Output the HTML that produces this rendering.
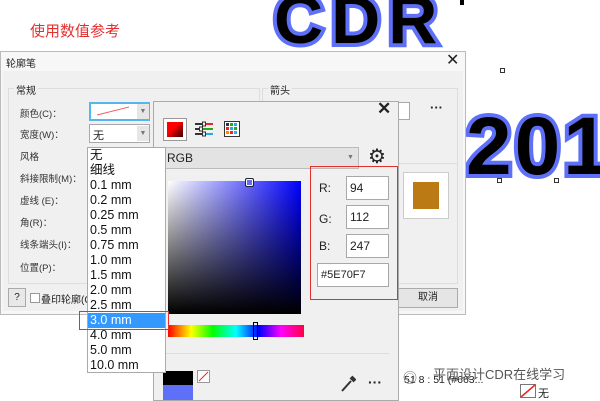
<!DOCTYPE html>
<html><head><meta charset="utf-8"><style>
*{margin:0;padding:0;box-sizing:border-box}
body{width:600px;height:400px;background:#fff;position:relative;overflow:hidden;font-family:"Liberation Sans","Noto Sans CJK SC",sans-serif;font-size:10px;color:#222}
.a{position:absolute}
.big{font-family:"Liberation Sans",sans-serif;font-weight:bold;color:#000;-webkit-text-stroke:8px #5e70f7;paint-order:stroke fill;line-height:1}
.lbl{position:absolute;font-size:9.5px;color:#333}
.inp{position:absolute;background:#fff;border:1px solid #a8a8a8}
.li{height:15px;line-height:15px;padding-left:2px;font-size:12.5px;color:#111}
</style></head><body>
<div class="a" style="left:30px;top:20px;color:#e53030;font-size:15px">使用数值参考</div>
<div class="a big" style="left:274px;top:-14px;font-size:68px;letter-spacing:8px">CDR</div>
<div class="a big" style="left:466px;top:106px;font-size:82px;letter-spacing:3px">201</div>
<div class="a" style="left:460px;top:0;width:4px;height:5px;background:#000"></div>
<div class="a" style="left:500px;top:68px;width:5px;height:5px;border:1px solid #333"></div>
<div class="a" style="left:497px;top:178px;width:5px;height:5px;border:1px solid #333"></div>
<div class="a" style="left:554px;top:178px;width:5px;height:5px;border:1px solid #333"></div>

<!-- dialog -->
<div class="a" style="left:0;top:51px;width:466px;height:264px;background:#f7f7f7;border:1px solid #bbb"></div>
<div class="a" style="left:6px;top:55px;font-size:10px">轮廓笔</div>
<div class="a" style="left:446px;top:50px;font-size:16px">✕</div>
<div class="a" style="left:3px;top:71px;width:460px;height:240px;background:#f0f0f0"></div>
<div class="a" style="left:8px;top:88px;width:252px;height:196px;border:1px solid #ddd"></div>
<div class="a" style="left:14px;top:82px;background:#f0f0f0;padding:0 2px">常规</div>
<div class="a" style="left:262px;top:88px;width:196px;height:196px;border:1px solid #ddd"></div>
<div class="a" style="left:268px;top:82px;background:#f0f0f0;padding:0 2px">箭头</div>
<div class="lbl" style="left:20px;top:106px">颜色(C)：</div>
<div class="lbl" style="left:20px;top:127px">宽度(W)：</div>
<div class="lbl" style="left:20px;top:149px">风格</div>
<div class="lbl" style="left:20px;top:171px">斜接限制(M)：</div>
<div class="lbl" style="left:20px;top:193px">虚线 (E)：</div>
<div class="lbl" style="left:20px;top:215px">角(R)：</div>
<div class="lbl" style="left:20px;top:237px">线条端头(I)：</div>
<div class="lbl" style="left:20px;top:260px">位置(P)：</div>
<div class="inp" style="left:89px;top:102px;width:61px;height:19px;border:2px solid #57b5ee"></div>
<svg class="a" style="left:96px;top:106px" width="34" height="10"><line x1="1" y1="9" x2="33" y2="1" stroke="#f06060" stroke-width="1"/></svg>
<div class="a" style="left:137px;top:104px;width:12px;height:15px;background:#e6e6e6;font-size:7px;text-align:center;line-height:15px;color:#777">▼</div>
<div class="inp" style="left:89px;top:124px;width:61px;height:19px"></div>
<div class="a" style="left:93px;top:127px;font-size:11px">无</div>
<div class="a" style="left:137px;top:126px;width:12px;height:15px;background:#e6e6e6;font-size:7px;text-align:center;line-height:15px;color:#777">▼</div>
<div class="a" style="left:8px;top:288px;width:18px;height:19px;border:1px solid #aaa;background:#e8e8e8;text-align:center;line-height:17px">?</div>
<div class="a" style="left:30px;top:293px;width:10px;height:10px;border:1px solid #999;background:#fff"></div>
<div class="a" style="left:41px;top:291px">叠印轮廓(O</div>
<div class="a" style="left:398px;top:288px;width:60px;height:20px;border:1px solid #aaa;background:#e5e5e5;text-align:center;line-height:18px">取消</div>
<div class="inp" style="left:398px;top:102px;width:12px;height:18px;border-left:none"></div>
<div class="a" style="left:430px;top:100px;font-size:13px;font-weight:bold">···</div>
<div class="a" style="left:398px;top:163px;width:60px;height:118px;border-top:1px solid #ddd"></div>
<div class="a" style="left:403px;top:172px;width:46px;height:47px;background:#fff;border:1px solid #ccc"></div>
<div class="a" style="left:413px;top:182px;width:26px;height:27px;background:#bc7a14"></div>

<!-- color popup -->
<div class="a" style="left:153px;top:101px;width:246px;height:300px;background:#f0f0f0;border:1px solid #aaa"></div>
<div class="a" style="left:377px;top:99px;font-size:17px;font-weight:bold">✕</div>
<div class="a" style="left:163px;top:118px;width:24px;height:23px;border:1px solid #999;background:#fff"></div>
<div class="a" style="left:167px;top:122px;width:16px;height:15px;background:linear-gradient(135deg,#f00 40%,#300)"></div>
<svg class="a" style="left:195px;top:121px" width="20" height="17"><g stroke-width="2"><line x1="0" y1="3" x2="7" y2="3" stroke="#333"/><line x1="11" y1="3" x2="18" y2="3" stroke="#e22"/><line x1="0" y1="8" x2="4" y2="8" stroke="#333"/><line x1="8" y1="8" x2="18" y2="8" stroke="#2a2"/><line x1="0" y1="13" x2="7" y2="13" stroke="#333"/><line x1="11" y1="13" x2="18" y2="13" stroke="#2ae"/></g><rect x="7.5" y="1" width="3" height="4" fill="none" stroke="#333"/><rect x="4.5" y="6" width="3" height="4" fill="none" stroke="#333"/><rect x="7.5" y="11" width="3" height="4" fill="none" stroke="#333"/></svg>
<svg class="a" style="left:224px;top:121px" width="16" height="16"><rect x="0.5" y="0.5" width="15" height="15" fill="#fff" stroke="#333"/><rect x="2" y="2" width="3" height="3" fill="#333"/><rect x="6" y="2" width="3" height="3" fill="#2a2"/><rect x="10" y="2" width="3" height="3" fill="#2ae"/><rect x="2" y="6" width="3" height="3" fill="#e22"/><rect x="6" y="6" width="3" height="3" fill="#2ae"/><rect x="10" y="6" width="3" height="3" fill="#2a2"/><rect x="2" y="10" width="3" height="3" fill="#f80"/><rect x="6" y="10" width="3" height="3" fill="#e22"/><rect x="10" y="10" width="3" height="3" fill="#2ae"/></svg>
<div class="a" style="left:165px;top:147px;width:194px;height:22px;background:#e3e3e3;border:1px solid #bbb"></div>
<div class="a" style="left:167px;top:151px;font-size:12px">RGB</div>
<div class="a" style="left:347px;top:154px;font-size:7px;color:#777">▼</div>
<div class="a" style="left:368px;top:146px;font-size:20px;line-height:22px">⚙</div>
<div class="a" style="left:168px;top:181px;width:133px;height:133px;background:linear-gradient(to bottom,transparent,#000),linear-gradient(to right,#fff,#00f)"></div>
<div class="a" style="left:245px;top:178px;width:9px;height:9px;border:1.5px solid #222;background:#5e70f7;border-radius:2px;box-shadow:0 0 0 1px #fff inset"></div>
<div class="a" style="left:168px;top:325px;width:136px;height:12px;background:linear-gradient(to right,#f00,#ff0 17%,#0f0 33%,#0ff 50%,#00f 67%,#f0f 83%,#f04)"></div>
<div class="a" style="left:253px;top:322px;width:5px;height:18px;border:1px solid #000"></div>
<div class="a" style="left:161px;top:353px;width:228px;height:1px;background:#ddd"></div>
<div class="a" style="left:163px;top:371px;width:30px;height:14px;background:#000"></div>
<div class="a" style="left:163px;top:385px;width:30px;height:15px;background:#5e70f7"></div>
<svg class="a" style="left:197px;top:370px" width="13" height="13"><rect x="0.5" y="0.5" width="12" height="12" fill="#fff" stroke="#999"/><line x1="2" y1="11" x2="11" y2="2" stroke="#e22"/></svg>
<svg class="a" style="left:340px;top:375px" width="16" height="18"><line x1="2" y1="16" x2="11" y2="6" stroke="#333" stroke-width="2"/><line x1="11" y1="2" x2="15" y2="6" stroke="#333" stroke-width="4"/></svg>
<div class="a" style="left:368px;top:374px;font-size:14px;font-weight:bold">···</div>
<div class="a" style="left:310px;top:166px;width:88px;height:134px;border:1px solid #e53030"></div>
<div class="a" style="left:319px;top:181px;font-size:12px">R:</div>
<div class="a" style="left:319px;top:212px;font-size:12px">G:</div>
<div class="a" style="left:319px;top:239px;font-size:12px">B:</div>
<div class="inp" style="left:346px;top:176px;width:43px;height:24px;font-size:12px;padding:4px 3px">94</div>
<div class="inp" style="left:346px;top:205px;width:43px;height:24px;font-size:12px;padding:4px 3px">112</div>
<div class="inp" style="left:346px;top:234px;width:43px;height:24px;font-size:12px;padding:4px 3px">247</div>
<div class="inp" style="left:317px;top:263px;width:72px;height:24px;font-size:11px;padding:5px 3px">#5E70F7</div>

<!-- dropdown list -->
<div class="a" style="left:87px;top:147px;width:79px;height:226px;background:#fff;border:1px solid #aaa;padding-top:0">
<div class="li">无</div><div class="li">细线</div><div class="li">0.1 mm</div><div class="li">0.2 mm</div><div class="li">0.25 mm</div><div class="li">0.5 mm</div><div class="li">0.75 mm</div><div class="li">1.0 mm</div><div class="li">1.5 mm</div><div class="li">2.0 mm</div><div class="li">2.5 mm</div><div class="li" style="background:#3399ff;color:#fff">3.0 mm</div><div class="li">4.0 mm</div><div class="li">5.0 mm</div><div class="li">10.0 mm</div></div>
<div class="a" style="left:79px;top:311px;width:90px;height:19px;border:1px solid #e53030"></div>

<!-- status -->
<div class="a" style="left:399px;top:360px;width:201px;height:40px;background:#fff"></div>
<div class="a" style="left:404px;top:374px;font-size:10.5px">51 8 : 51 (#663...</div>
<div class="a" style="left:433px;top:364px;font-size:13px;color:#555">平面设计CDR在线学习</div>
<div class="a" style="left:403px;top:368px;font-size:14px;color:#777">◎</div>
<svg class="a" style="left:520px;top:384px" width="16" height="14"><rect x="0.5" y="0.5" width="15" height="13" fill="#fff" stroke="#777"/><line x1="1" y1="13" x2="15" y2="1" stroke="#e22" stroke-width="1.5"/></svg>
<div class="a" style="left:538px;top:385px;font-size:11px">无</div>
</body></html>
